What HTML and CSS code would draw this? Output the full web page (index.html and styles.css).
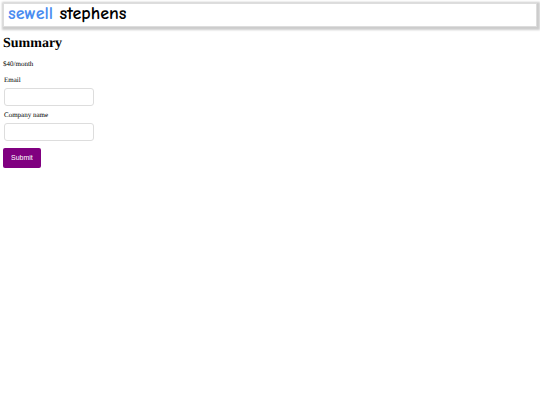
FILE: index.html
```
<!DOCTYPE html>
<html lang="en">
<head>
    <meta charset="UTF-8">
    <meta name="viewport" content="width=device-width, initial-scale=1.0">
    <title>Sewell Stephens - Summary</title>
    <link rel="stylesheet" href="styles.css">
</head>
<body>
    <header class="navbar">
        <a href="#" class="logo"><span class="logo-first">sewell</span> <span>stephens</span></a>
    </header>
    <main>
        <h1>Summary</h1>
        <p class="price">$40/month</p>
        <form class="signup-form">
            <label for="email">Email</label>
            <input type="email" id="email" name="email">
            <label for="company">Company name</label>
            <input type="text" id="company" name="company">
            <button type="submit">Submit</button>
        </form>
    </main>
</body>
</html>
```

FILE: styles.css
```
body {
    font-family: "Liberation Serif", "Times New Roman", serif;
    font-size: 7px;
    line-height: 8px;
    text-rendering: geometricPrecision;
    margin: 0;
    padding: 3px;
    background-color: #fff;
    color: #000;
}
.navbar {
    display: flex;
    align-items: center;
    box-sizing: border-box;
    height: 24px;
    padding: 0 4px 2px;
    background-color: #fff;
    border: 1px solid #ddd;
    box-shadow: 1px 1px 2px 2px #ccc;
}
.logo {
    font-family: "Comic Sans MS", "Comic Neue", Lato, sans-serif;
    font-size: 18px;
    font-weight: bold;
    line-height: 20px;
    color: #000;
    text-decoration: none;
}
.logo-first {
    color: #4a8cf0;
}
h1 {
    font-size: 14px;
    line-height: 16px;
    margin: 9px 0 8px;
}
.price {
    margin: 0 0 8px;
}
.signup-form label {
    display: block;
    margin: 0 1px 4px;
}
.signup-form input {
    display: block;
    box-sizing: border-box;
    width: 90px;
    height: 18px;
    margin: 0 1px 5px;
    padding: 4px 7px;
    border: 1px solid #ddd;
    border-radius: 3px;
    font-size: 7px;
}
.signup-form button {
    margin-top: 2px;
    padding: 6px 8px;
    border: none;
    border-radius: 2px;
    background-color: purple;
    color: #fff;
    font-family: "Liberation Sans", Arial, sans-serif;
    font-size: 7px;
    line-height: 8px;
    cursor: pointer;
}
```
